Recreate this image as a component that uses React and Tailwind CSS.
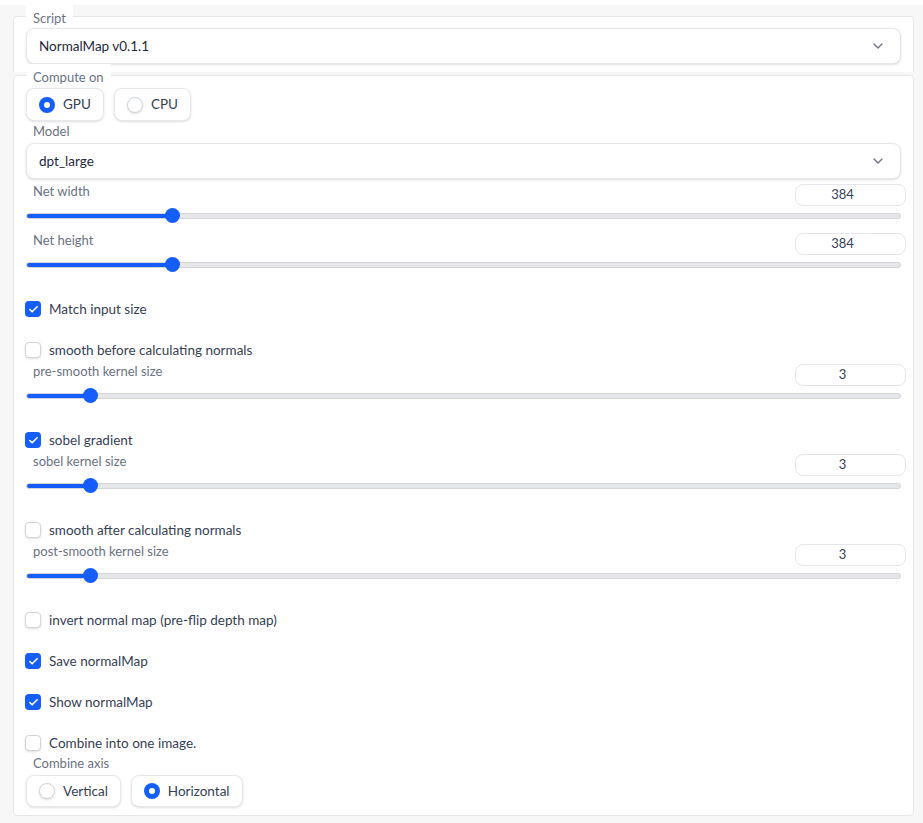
import { ChevronDown, Check } from 'lucide-react'

/* Gradio-style script panel: fieldset blocks, sliders, checkboxes, radios */

const FONT = "font-['Lato','Liberation_Sans',sans-serif]"

function Legend({ children }) {
  return (
    <legend className="px-[7px] pt-[4px] bg-white text-[13px] leading-[18px] text-gray-500">
      {children}
    </legend>
  )
}

function Label({ children, className = '' }) {
  return (
    <div className={`h-[20px] flex items-center px-[7px] text-[13px] text-gray-500 ${className}`}>
      {children}
    </div>
  )
}

function Dropdown({ value, className = '' }) {
  return (
    <div className={`h-[36px] flex items-center justify-between pl-[12px] pr-[14px] bg-white border border-[#e5e7eb] rounded-lg shadow-sm text-[13.5px] text-gray-800 ${className}`}>
      <span>{value}</span>
      <ChevronDown size={16} strokeWidth={2} className="text-gray-500" />
    </div>
  )
}

function Radio({ label, checked }) {
  return (
    <div className="h-full flex items-center gap-[8px] px-[12px] bg-white border border-[#e5e7eb] rounded-lg shadow-sm text-[13.5px] text-gray-700">
      {checked ? (
        <span className="w-4 h-4 rounded-full bg-blue-600 flex items-center justify-center">
          <span className="w-[6px] h-[6px] rounded-full bg-white" />
        </span>
      ) : (
        <span className="w-4 h-4 rounded-full border border-gray-300 bg-white shadow-sm" />
      )}
      <span>{label}</span>
    </div>
  )
}

function CheckRow({ label, checked, className = '' }) {
  return (
    <div className={`h-[16px] flex items-center gap-[8px] -ml-px text-[13.5px] text-gray-700 ${className}`}>
      {checked ? (
        <span className="w-4 h-4 rounded-[4px] bg-blue-600 flex items-center justify-center">
          <Check size={11} strokeWidth={3.5} className="text-white" />
        </span>
      ) : (
        <span className="w-4 h-4 rounded-[4px] border border-gray-300 bg-white shadow-sm" />
      )}
      <span>{label}</span>
    </div>
  )
}

function SliderBlock({ label, value, pct, className = '' }) {
  return (
    <div className={className}>
      <div className="h-[25px] flex justify-between items-start">
        <Label className="mt-px">{label}</Label>
        <div className="mt-[3px] -mr-[5px] w-[111px] h-[22px] flex items-center justify-center pr-[16px] bg-white border border-[#e5e7eb] rounded-lg text-[13px] text-gray-700">
          {value}
        </div>
      </div>
      <div className="mt-[2px] h-[15px] relative flex items-center">
        <div className="w-full h-[6px] rounded-full bg-[#e5e7eb] border border-[#d4d4d8] overflow-hidden">
          <div className="h-full bg-blue-600" style={{ width: `${pct}%` }} />
        </div>
        <span
          className="absolute top-0 w-[15px] h-[15px] -ml-[7px] rounded-full bg-blue-600"
          style={{ left: `${pct}%` }}
        />
      </div>
    </div>
  )
}

export default function App() {
  return (
    <div className={`min-h-screen bg-[#f7f7f8] pl-[13px] pr-[9px] ${FONT}`}>
      <fieldset className="mt-[5px] px-[12px] pb-[8px] bg-white border border-b-0 border-[#e5e7eb] rounded-t-[4px]">
        <Legend>Script</Legend>
        <Dropdown value="NormalMap v0.1.1" className="mt-[1px]" />
      </fieldset>

      <fieldset className="-mt-[8px] px-[12px] pb-[8px] bg-white border border-[#e5e7eb] rounded-[4px]">
        <Legend>Compute on</Legend>
        <div className="mt-[2px] h-[33px] flex gap-[10px]">
          <Radio label="GPU" checked />
          <Radio label="CPU" />
        </div>

        <Label className="mt-[1px]">Model</Label>
        <Dropdown value="dpt_large" className="mt-[1px]" />

        <SliderBlock label="Net width" value="384" pct={16.7} className="mt-[2px]" />
        <SliderBlock label="Net height" value="384" pct={16.7} className="mt-[7px]" />

        <CheckRow label="Match input size" checked className="mt-[29px]" />

        <CheckRow label="smooth before calculating normals" className="mt-[25px]" />
        <SliderBlock label="pre-smooth kernel size" value="3" pct={7.3} className="mt-[3px]" />

        <CheckRow label="sobel gradient" checked className="mt-[29px]" />
        <SliderBlock label="sobel kernel size" value="3" pct={7.3} className="mt-[3px]" />

        <CheckRow label="smooth after calculating normals" className="mt-[29px]" />
        <SliderBlock label="post-smooth kernel size" value="3" pct={7.3} className="mt-[3px]" />

        <CheckRow label="invert normal map (pre-flip depth map)" className="mt-[29px]" />
        <CheckRow label="Save normalMap" checked className="mt-[25px]" />
        <CheckRow label="Show normalMap" checked className="mt-[25px]" />
        <CheckRow label="Combine into one image." className="mt-[25px]" />

        <Label className="mt-[3px]">Combine axis</Label>
        <div className="mt-[1px] h-[32px] flex gap-[10px]">
          <Radio label="Vertical" />
          <Radio label="Horizontal" checked />
        </div>
      </fieldset>
    </div>
  )
}
